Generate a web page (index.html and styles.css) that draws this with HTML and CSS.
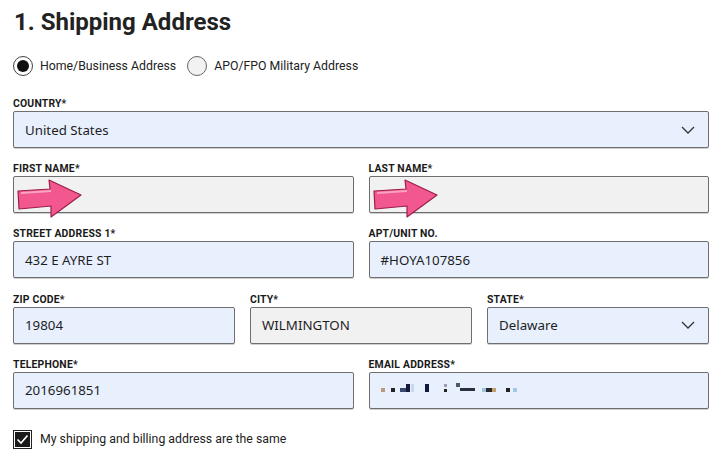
FILE: index.html
```html
<!DOCTYPE html>
<html lang="en">
<head>
  <meta charset="UTF-8">
  <title>Checkout - Shipping Address</title>
  <link rel="stylesheet" href="styles.css">
</head>
<body>
  <div class="page">
    <h1>1. Shipping Address</h1>

    <div class="radios">
      <label class="radio"><span class="dot checked"></span>Home/Business Address</label>
      <label class="radio"><span class="dot"></span>APO/FPO Military Address</label>
    </div>

    <div class="form">
      <div class="row one">
        <div class="field">
          <div class="lbl">Country*</div>
          <div class="box blue select">United States
            <svg class="chev" width="14" height="8" viewBox="0 0 14 8"><path d="M1 1 L7 7 L13 1" fill="none" stroke="#333" stroke-width="1.3"/></svg>
          </div>
        </div>
      </div>

      <div class="row two">
        <div class="field">
          <div class="lbl">First Name*</div>
          <div class="box grey"></div>
          <svg class="arrow" width="68" height="40" viewBox="0 0 68 40"><path d="M2 12 L34 10 L33 1 L65 16 L35 38 L35 27 L3 30 Z" fill="#f35790" stroke="#9c1f48" stroke-width="1.2" stroke-linejoin="round"/><path d="M5 14 L35 12" stroke="#f9a3c2" stroke-width="2"/></svg>
        </div>
        <div class="field">
          <div class="lbl">Last Name*</div>
          <div class="box grey"></div>
          <svg class="arrow" width="68" height="40" viewBox="0 0 68 40"><path d="M2 12 L34 10 L33 1 L65 16 L35 38 L35 27 L3 30 Z" fill="#f35790" stroke="#9c1f48" stroke-width="1.2" stroke-linejoin="round"/><path d="M5 14 L35 12" stroke="#f9a3c2" stroke-width="2"/></svg>
        </div>
      </div>

      <div class="row two">
        <div class="field">
          <div class="lbl">Street Address 1*</div>
          <div class="box blue">432 E AYRE ST</div>
        </div>
        <div class="field">
          <div class="lbl">Apt/Unit No.</div>
          <div class="box blue">#HOYA107856</div>
        </div>
      </div>

      <div class="row three">
        <div class="field">
          <div class="lbl">Zip Code*</div>
          <div class="box blue">19804</div>
        </div>
        <div class="field">
          <div class="lbl">City*</div>
          <div class="box grey">WILMINGTON</div>
        </div>
        <div class="field">
          <div class="lbl">State*</div>
          <div class="box blue select">Delaware
            <svg class="chev" width="14" height="8" viewBox="0 0 14 8"><path d="M1 1 L7 7 L13 1" fill="none" stroke="#333" stroke-width="1.3"/></svg>
          </div>
        </div>
      </div>

      <div class="row two">
        <div class="field">
          <div class="lbl">Telephone*</div>
          <div class="box blue">2016961851</div>
        </div>
        <div class="field">
          <div class="lbl">Email Address*</div>
          <div class="box blue">
            <svg class="blur" width="150" height="12" viewBox="0 0 150 12">
              <rect x="0" y="4" width="4" height="4" fill="#b89a80"/>
              <rect x="10" y="4" width="4" height="4" fill="#222"/>
              <rect x="19" y="4" width="6" height="4" fill="#3a4a6a"/>
              <rect x="25" y="0" width="4" height="8" fill="#1a1a3a"/>
              <rect x="30" y="0" width="3" height="8" fill="#c8d8f0"/>
              <rect x="44" y="0" width="4" height="8" fill="#12183a"/>
              <rect x="63" y="0" width="3" height="3" fill="#9aa0b0"/>
              <rect x="63" y="5" width="3" height="3" fill="#222"/>
              <rect x="75" y="-1" width="4" height="4" fill="#4a5a6a"/>
              <rect x="79" y="4" width="15" height="3" fill="#2a3040"/>
              <rect x="101" y="4" width="4" height="4" fill="#9cc4e0"/>
              <rect x="105" y="4" width="6" height="4" fill="#2a2a2a"/>
              <rect x="111" y="4" width="4" height="4" fill="#c0a070"/>
              <rect x="125" y="4" width="4" height="4" fill="#222"/>
              <rect x="132" y="4" width="4" height="4" fill="#a0c8e8"/>
            </svg>
          </div>
        </div>
      </div>
    </div>

    <label class="check"><span class="tick"><svg width="13" height="11" viewBox="0 0 13 11"><path d="M1.5 5.5 L5 9 L11.5 1.5" fill="none" stroke="#fff" stroke-width="1.6"/></svg></span>My shipping and billing address are the same</label>
  </div>
</body>
</html>
```

FILE: styles.css
```css
body {
  margin: 0;
  background: #fff;
  font-family: Roboto, "Liberation Sans", Arial, sans-serif;
  color: #1e1e1e;
}
.page {
  width: 696px;
  padding: 6px 0 0 13px;
}
h1 {
  margin: 0 0 0 1px;
  font-size: 24px;
  line-height: 32px;
  font-weight: 700;
  color: #222;
}
.radios {
  display: flex;
  gap: 11px;
  margin-top: 17px;
  height: 22px;
  align-items: center;
}
.radio {
  display: flex;
  align-items: center;
  gap: 7px;
  font-size: 12.3px;
  color: #222;
}
.dot {
  width: 18px;
  height: 18px;
  border: 1.5px solid #666;
  border-radius: 50%;
  background: #f2f2f2;
  display: flex;
  align-items: center;
  justify-content: center;
}
.dot.checked {
  border-color: #444;
  background: #fff;
}
.dot.checked::after {
  content: "";
  width: 12px;
  height: 12px;
  border-radius: 50%;
  background: #111;
}
.form {
  margin-top: 21px;
  display: flex;
  flex-direction: column;
  gap: 15.2px;
}
.row {
  display: grid;
  column-gap: 15px;
}
.row.one { grid-template-columns: 1fr; }
.row.two { grid-template-columns: 1fr 1fr; }
.row.three { grid-template-columns: 1fr 1fr 1fr; }
.field {
  position: relative;
}
.lbl {
  font-size: 10.4px;
  line-height: 12px;
  font-weight: 700;
  text-transform: uppercase;
  letter-spacing: 0.2px;
  margin-bottom: 1px;
  color: #1a1a1a;
}
.box {
  height: 37px;
  box-sizing: border-box;
  border: 1px solid #6e6e6e;
  border-radius: 2px;
  padding: 0 13px 0 11px;
  display: flex;
  align-items: center;
  font-family: "Noto Sans", "Open Sans", sans-serif;
  font-size: 13.3px;
  color: #1e1e1e;
  box-shadow: 0 1px 0 #cfcfcf;
}
.box.blue { background: #e8f0fe; }
.box.grey { background: #f1f1f1; }
.select {
  justify-content: space-between;
}
.arrow {
  position: absolute;
  left: 3px;
  top: 16px;
}
.blur {
  overflow: visible;
}
.check {
  display: flex;
  align-items: center;
  gap: 8px;
  margin-top: 21px;
  font-size: 12.3px;
  color: #222;
}
.tick {
  width: 17px;
  height: 17px;
  border: 1.5px solid #222;
  background: #1a1a1a;
  box-shadow: inset 0 0 0 1px #fff;
  display: flex;
  align-items: center;
  justify-content: center;
}
```
